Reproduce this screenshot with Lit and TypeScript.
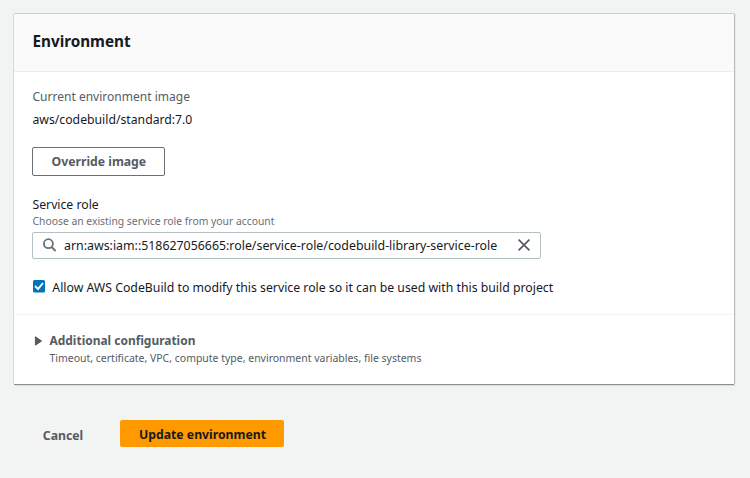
import { LitElement, html, css } from "lit";
import { customElement } from "lit/decorators.js";

@customElement("app-root")
export class AppRoot extends LitElement {
  static styles = css`
    :host { display: block; height: 478px; box-sizing: border-box; padding: 14px 16px 0 14px; overflow: hidden;
      background: #f2f3f3; color: #16191f; font: 13px/20px "Noto Sans", sans-serif; white-space: nowrap; }
    * { box-sizing: border-box; }
    span { display: inline-block; transform: translateX(.5px) scaleX(.94); transform-origin: 0 50%; }
    button span { transform-origin: 50% 50%; }
    .card { height: 370px; background: #fff; box-shadow: 0 -1px 0 #c9cfcf, -1px 0 0 #d5dbdb, 1px 0 0 #b7bfc5, 0 1px 0 #879196, 1px 2px 0 #d5dbdb, 2px 0 0 #e6e9e9; }
    .head { height: 58px; padding: 15px 18px 0; background: #fafafa; border-bottom: 1px solid #eaeded; }
    h2 { margin: 0; font-size: 16px; line-height: 24px; font-weight: 700; }
    h2 span { transform: translateX(.5px) scaleX(.952); }
    .body { height: 242px; padding: 14px 18px 0; }
    .label { color: #545b64; }
    .value { margin-top: 3px; }
    button { font: inherit; padding: 0; font-weight: 700; }
    .override { display: block; width: 133px; height: 29px; margin: 18px 0 18px; padding-bottom: 1px; border: 1px solid #687078; border-radius: 2px; background: #fff; color: #545b64; }
    .hint { font-size: 11px; line-height: 14px; color: #687078; }
    .search { display: flex; align-items: center; width: 509px; height: 27px; margin-top: 4px; padding: 0 10px; border: 1px solid #b4c0c1; border-radius: 2px; }
    .search span { flex: 1; margin-left: 7px; min-width: 0; margin-top: -1px; }
    svg { display: block; flex: none; }
    .search svg { margin-top: -1px; }
    .t1 { transform: translateX(.5px) scaleX(.925); }
    .t5 { transform: scaleX(.951); }
    .t6 { transform: translateX(.3px) scaleX(.944); }
    .t7 { transform: translateX(.5px) scaleX(.919); }
    .t8 { transform: translateX(.5px) scaleX(.952); }
    .check { display: flex; align-items: center; gap: 7px; margin: 18px 0 0 1px; }
    .check svg { margin-top: -1px; }
    .more { display: flex; height: 70px; padding: 15px 20px; border-top: 1px solid #f2f3f3; color: #545b64; }
    .more svg { margin: 6px 6px 0 0; }
    .title { font-weight: 700; }
    .sub { font-size: 11px; line-height: 15px; }
    .actions { display: flex; margin: 36px 0 0 27px; }
    .cancel { border: 0; background: none; color: #545b64; margin-right: 36px; padding-top: 2px; }
    .update { width: 164.5px; height: 27px; border: 0; border-radius: 2px; background: #f90; color: #16191f; }
    .update span { transform: scaleX(.94); }
  `;
  render() {
    return html`
      <section class="card">
        <header class="head"><h2><span>Environment</span></h2></header>
        <div class="body">
          <div class="label"><span class="t1">Current environment image</span></div>
          <div class="value"><span>aws/codebuild/standard:7.0</span></div>
          <button class="override"><span>Override image</span></button>
          <div><span>Service role</span></div>
          <div class="hint"><span>Choose an existing service role from your account</span></div>
          <div class="search">
            <svg width="14" height="14" viewBox="0 0 14 14" fill="none" stroke="#687078" stroke-width="1.8"><circle cx="5.4" cy="5.7" r="4.5"/><path d="M8.6 9l4 4"/></svg>
            <span class="t5">arn:aws:iam::518627056665:role/service-role/codebuild-library-service-role</span>
            <svg width="12" height="12" viewBox="0 0 12 12" fill="none" stroke="#545b64" stroke-width="1.7"><path d="M.6.6l10.8 10.8M11.4.6L.6 11.4"/></svg>
          </div>
          <div class="check">
            <svg width="12" height="13" viewBox="0 0 12 13"><rect width="12" height="12.6" rx="1.5" fill="#0073bb"/><path d="M2 6l3 3L10 3" fill="none" stroke="#fff" stroke-width="1.9"/></svg>
            <span class="t6">Allow AWS CodeBuild to modify this service role so it can be used with this build project</span>
          </div>
        </div>
        <div class="more">
          <svg width="9" height="10" viewBox="0 0 9 10"><path d="M1.4.8L7.6 5l-6.2 4.2z" fill="#545b64" stroke="#545b64" stroke-linejoin="round"/></svg>
          <div><div class="title"><span class="t7">Additional configuration</span></div>
          <div class="sub"><span class="t8">Timeout, certificate, VPC, compute type, environment variables, file systems</span></div></div>
        </div>
      </section>
      <footer class="actions"><button class="cancel"><span>Cancel</span></button><button class="update"><span>Update environment</span></button></footer>
    `;
  }
}
